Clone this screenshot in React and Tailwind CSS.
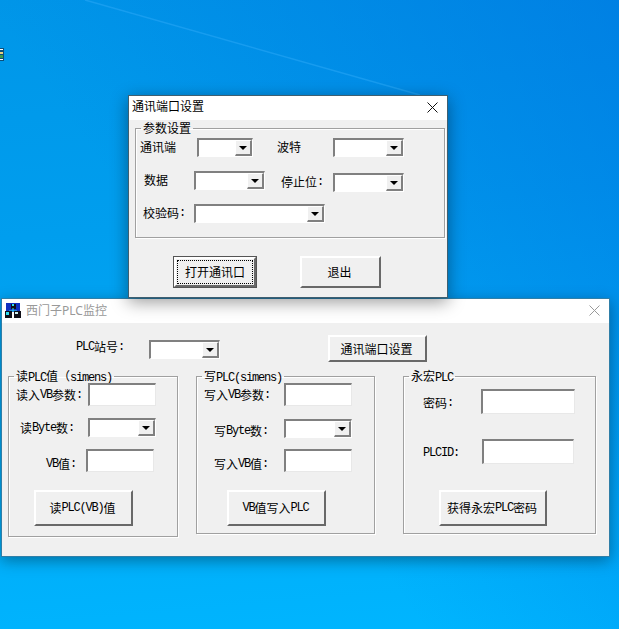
import React from 'react';

const FONT = "font-['Noto_Sans_CJK_SC','Liberation_Mono',monospace]";

// Latin runs are half the CJK width, like the bitmap font in the dialogs
function Txt({ children }) {
  const parts = children.split(/([\x20-\x7e]+)/).filter(Boolean);
  return parts.map((p, i) =>
    /^[\x20-\x7e]+$/.test(p)
      ? <span key={i} className="font-['Liberation_Mono',monospace] text-[12px] tracking-[-1.2px] whitespace-pre">{p}</span>
      : <span key={i}>{p}</span>
  );
}

function Label({ text, className = '' }) {
  return (
    <div className={`shrink-0 flex items-center pb-[2px] whitespace-nowrap text-[12px] leading-none text-black ${className}`}>
      <Txt>{text}</Txt>
    </div>
  );
}

function Combo({ className = '' }) {
  return (
    <div className={`shrink-0 flex h-[19px] bg-white border-t-2 border-l-2 border-t-[#808080] border-l-[#808080] border-r border-b border-r-white border-b-white ${className}`}>
      <div className="flex-1" />
      <div className="w-[17px] flex items-center justify-center bg-[#f0f0f0] border-t border-l border-t-white border-l-white border-r-2 border-b-2 border-r-[#808080] border-b-[#808080]">
        <svg width="8" height="4" viewBox="0 0 8 4"><path d="M0 0h8L4 4z" fill="#000" /></svg>
      </div>
    </div>
  );
}

function Input({ className = '' }) {
  return <div className={`shrink-0 bg-white border-t-2 border-l-2 border-t-[#808080] border-l-[#808080] border-r border-b border-r-[#e8e8e8] border-b-[#e8e8e8] ${className}`} />;
}

function Btn({ text, className = '' }) {
  return (
    <div className={`shrink-0 flex items-center justify-center pr-[2px] whitespace-nowrap bg-[#f0f0f0] text-[12px] leading-none text-black border-t-2 border-l-2 border-t-white border-l-white border-r-2 border-b-2 border-r-[#696969] border-b-[#696969] ${className}`}>
      <Txt>{text}</Txt>
    </div>
  );
}

function Group({ title, className = '', children }) {
  return (
    <fieldset className={`shrink-0 border border-[#a0a0a0] shadow-[1px_1px_0_#fff,inset_1px_1px_0_#fff] ${className}`}>
      <legend className="ml-[5px] px-[2px] h-[14px] text-[12px] leading-[14px] text-black whitespace-nowrap">
        <Txt>{title}</Txt>
      </legend>
      {children}
    </fieldset>
  );
}

function AppIcon() {
  return (
    <svg width="16" height="16" viewBox="0 0 16 16" className="shrink-0">
      <rect x="1" y="0" width="14" height="9" fill="#1030c0" />
      <rect x="6" y="1" width="5" height="5" fill="#101018" />
      <rect x="7" y="1" width="2" height="2" fill="#30e0f0" />
      <path d="M8 5v3M4 8h8" stroke="#30e0f0" />
      <rect x="0" y="8" width="7" height="7" fill="#101018" />
      <rect x="9" y="8" width="7" height="7" fill="#101018" />
      <rect x="1" y="9" width="3" height="3" fill="#30e0f0" />
      <rect x="10" y="9" width="3" height="2" fill="#d0f0f0" />
    </svg>
  );
}

function CloseX({ color }) {
  return (
    <svg width="11" height="11" viewBox="0 0 11 11" className="shrink-0 mb-[2px]">
      <path d="M.5.5l10 10M10.5.5l-10 10" stroke={color} strokeWidth="1" fill="none" />
    </svg>
  );
}

function SerialDialog() {
  return (
    <div className="absolute z-10 left-[128px] top-[95px] w-[320px] border border-[#3f5f70] bg-[#f0f0f0] shadow-[0_4px_16px_rgba(0,0,0,0.4)]">
      <div className="h-[24px] bg-white flex items-center justify-between pl-[3px] pr-[9px]">
        <span className="pb-[4px] text-[12px] leading-none text-black">通讯端口设置</span>
        <CloseX color="#111" />
      </div>
      <div className="pt-px">
        <Group title="参数设置" className="ml-[6px] w-[310px] pb-[14px]">
          <div className="flex mt-[3px] ml-[4px]">
            <Label text="通讯端" className="w-[57px] h-[19px]" />
            <Combo className="w-[56px]" />
            <Label text="波特" className="ml-[24px] w-[56px] h-[19px]" />
            <Combo className="w-[71px]" />
          </div>
          <div className="flex items-start mt-[14px] ml-[8px]">
            <Label text="数据" className="w-[50px] h-[19px]" />
            <Combo className="w-[71px]" />
            <Label text="停止位:" className="ml-[16px] mt-[2px] w-[52px] h-[19px]" />
            <Combo className="w-[71px] mt-[2px]" />
          </div>
          <div className="flex mt-[12px] ml-[7px]">
            <Label text="校验码:" className="w-[51px] h-[19px]" />
            <Combo className="w-[131px]" />
          </div>
        </Group>
        <div className="flex mt-[18px] ml-[44px] pb-[9px]">
          <div className="shrink-0 w-[84px] h-[32px] border border-[#555] bg-[#f0f0f0]">
            <div className="relative h-full border-t-2 border-l-2 border-t-white border-l-white border-r-2 border-b-2 border-r-[#696969] border-b-[#696969] flex items-center justify-center text-[12px] leading-none text-black">
              <div className="absolute inset-[1px] border border-dotted border-black" />
              打开通讯口
            </div>
          </div>
          <Btn text="退出" className="ml-[43px] w-[81px] h-[32px]" />
        </div>
      </div>
    </div>
  );
}

function MainWindow() {
  return (
    <div className="absolute left-[1px] top-[298px] w-[609px] border border-[#2f7fa8] bg-[#f0f0f0] shadow-[0_4px_14px_rgba(0,0,0,0.35)]">
      <div className="h-[24px] bg-white flex items-center pl-[3px] pr-[9px]">
        <AppIcon />
        <span className="ml-[5px] flex-1 text-[12px] leading-none text-[#999] font-['Noto_Sans','Noto_Sans_CJK_SC',sans-serif]">西门子PLC监控</span>
        <CloseX color="#999" />
      </div>

      <div className="flex items-start mt-[12px] ml-[74px]">
        <Label text="PLC站号:" className="w-[73px] h-[19px] mt-[3px]" />
        <Combo className="w-[71px] mt-[5px]" />
        <Btn text="通讯端口设置" className="ml-[108px] w-[99px] h-[27px]" />
      </div>

      <div className="flex items-start mt-[7px] ml-[6px] pb-[19px]">
        <Group title="读PLC值（simens)" className="w-[170px] pb-[10px]">
          <div className="flex items-center ml-[7px]">
            <Label text="读入VB参数:" className="w-[72px] translate-y-[1px]" />
            <Input className="w-[68px] h-[23px]" />
          </div>
          <div className="flex items-center mt-[12px] ml-[11px]">
            <Label text="读Byte数:" className="w-[68px] translate-y-[1px]" />
            <Combo className="w-[68px]" />
          </div>
          <div className="flex items-center mt-[12px] ml-[37px]">
            <Label text="VB值:" className="w-[40px] translate-y-[4px]" />
            <Input className="w-[68px] h-[23px]" />
          </div>
          <Btn text="读PLC(VB)值" className="mt-[18px] ml-[25px] w-[99px] h-[36px]" />
        </Group>

        <Group title="写PLC(simens)" className="ml-[18px] w-[179px] pb-[7px]">
          <div className="flex items-center ml-[7px]">
            <Label text="写入VB参数:" className="w-[80px] translate-y-[1px]" />
            <Input className="w-[68px] h-[23px]" />
          </div>
          <div className="flex items-center mt-[13px] ml-[17px]">
            <Label text="写Byte数:" className="w-[70px] translate-y-[3px]" />
            <Combo className="w-[68px]" />
          </div>
          <div className="flex items-center mt-[11px] ml-[17px]">
            <Label text="写入VB值:" className="w-[70px] translate-y-[4px]" />
            <Input className="w-[68px] h-[23px]" />
          </div>
          <Btn text="VB值写入PLC" className="mt-[18px] ml-[30px] w-[99px] h-[36px]" />
        </Group>

        <Group title="永宏PLC" className="ml-[28px] w-[193px] pb-[7px]">
          <div className="flex items-center mt-[6px] ml-[19px]">
            <Label text="密码:" className="w-[58px] translate-y-[2px]" />
            <Input className="w-[94px] h-[25px]" />
          </div>
          <div className="flex items-center mt-[25px] ml-[19px]">
            <Label text="PLCID:" className="w-[59px] translate-y-[2px]" />
            <Input className="w-[92px] h-[25px]" />
          </div>
          <Btn text="获得永宏PLC密码" className="mt-[26px] ml-[35px] w-[108px] h-[36px]" />
        </Group>
      </div>
    </div>
  );
}

export default function App() {
  return (
    <div className={`relative w-[619px] h-[629px] overflow-hidden bg-[linear-gradient(175deg,#0096e8_0%,#009eee_35%,#00b6ff_100%)] ${FONT}`}>
      {/* darker toward the top right corner of the wallpaper */}
      <div className="absolute inset-0 bg-[linear-gradient(235deg,rgba(0,100,220,0.45)_0%,rgba(0,110,220,0)_60%)]" />
      {/* wallpaper light streak */}
      <svg className="absolute left-0 top-0" width="619" height="120" viewBox="0 0 619 120">
        <path d="M85 0L420 95" stroke="#2aa8f5" strokeOpacity="0.55" strokeWidth="1.5" fill="none" />
      </svg>
      {/* clipped desktop icon at the screen edge */}
      <svg className="absolute left-0 top-[48px]" width="4" height="13" viewBox="0 0 4 13">
        <rect width="4" height="13" fill="#0d4f7a" />
        <rect y="1" width="3" height="1" fill="#fff" />
        <rect y="4" width="3" height="2" fill="#e8d080" />
        <rect y="7" width="3" height="3" fill="#3a9a50" />
        <rect y="11" width="3" height="1" fill="#fff" />
      </svg>
      <MainWindow />
      <SerialDialog />
    </div>
  );
}
